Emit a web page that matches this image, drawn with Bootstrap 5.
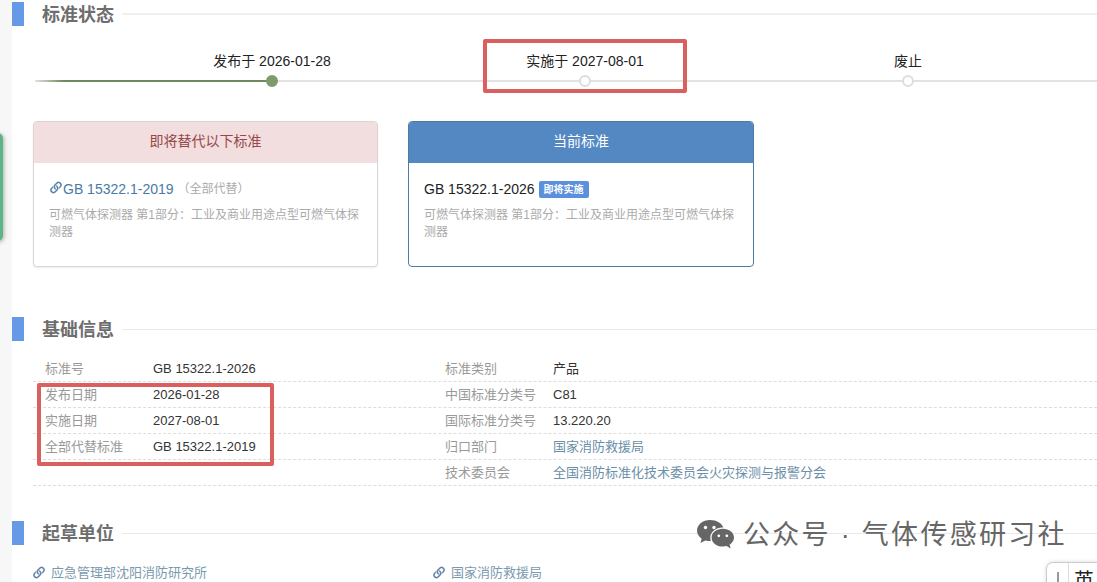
<!DOCTYPE html>
<html lang="zh-CN">
<head>
<meta charset="utf-8">
<title>标准状态</title>
<link href="https://cdn.jsdelivr.net/npm/bootstrap@5.3.0/dist/css/bootstrap.min.css" rel="stylesheet">
<style>
html, body { height: 582px; overflow: hidden; }
body { background: #f7f7f7; font-family: "Liberation Sans", "Noto Sans CJK SC", sans-serif; font-size: 13px; color: #222; position: relative; }
.sheet { margin-left: 12px; height: 582px; background: #fff; padding-top: 2px; overflow: hidden; }
.sec-head { height: 24px; }
.sec-mark { width: 12px; height: 24px; background: #6699e6; margin-right: 18px; }
.sec-title { font-size: 18px; font-weight: 700; color: #6e6e6e; margin: 0; line-height: 26px; height: 24px; }
.sec-rule { height: 1px; background: #e9e9e9; margin-left: 8px; margin-top: 1px; }
.sec-rule-thick { height: 2px; background: #f0f0f0; margin-top: 0; }
.steps { position: relative; margin-top: 25px; padding-left: 104px; }
.track { position: absolute; left: 23px; right: 0; top: 29px; height: 2px; background: #e2e2e2; }
.track-done { position: absolute; left: 23px; width: 237px; top: 29px; height: 2px; background: linear-gradient(90deg, #e2e2e2, #6f8a5e 12%, #6f8a5e); }
.step { position: relative; font-size: 14px; line-height: 20px; color: #222; text-align: center; }
.step-a { width: 312px; } .step-b { width: 314px; } .step-c { width: 332px; }
.dot { width: 12px; height: 12px; border-radius: 50%; margin: 4px auto 0; background: #fff; border: 2px solid #ddd; }
.dot-done { background: #7f9a6c; border-color: #7f9a6c; }
.cards { margin: 34px 0 0 21px; gap: 30px; }
.std-card { width: 346px; height: 146px; border-radius: 4px; }
.card-old { width: 345px; border-color: #ddd4d4; box-shadow: 0 1px 2px rgba(0,0,0,.08); }
.card-now { border-color: #4f7ba3; }
.std-card .card-header { height: 41px; padding: 0; line-height: 38px; text-align: center; font-size: 14px; border-bottom: 0; border-radius: 3px 3px 0 0; }
.head-old { background: #f2dede; color: #96484a; }
.head-now { background: #5488c2; color: #fff; }
.std-card .card-body { padding: 16px 15px 0; }
.std-name { font-size: 14px; line-height: 20px; display: flex; align-items: center; }
.std-link { color: #4a7aa6; text-decoration: none; }
.std-note { color: #aaa; font-size: 12px; margin-left: 4px; }
.std-desc { color: #aaa; font-size: 12px; line-height: 17px; margin-top: 8px; }
.pill { background: #5b90dc; color: #fff; font-size: 10px; font-weight: 700; padding: 0 5px; line-height: 17px; margin-left: 4px; border-radius: 2px; }
.chain { width: 16px; height: 16px; fill: #4a7aa6; stroke: #4a7aa6; stroke-width: .45; flex: none; margin: -2px -1px 0 -1px; }
.sec-two { margin-top: 50px; }
.info { margin: 15px 0 0 21px; }
.info-row { height: 26px; border-bottom: 1px dashed #ddd; line-height: 25px; }
.info-cell { width: 400px; padding-left: 12px; white-space: nowrap; }
.info-key { width: 108px; color: #999; }
.info-val { color: #333; }
.info-link { color: #6b8fa8; text-decoration: none; }
.sec-three { margin-top: 35px; }
.org-list { margin: 15px 0 0 21px; line-height: 26px; }
.org-item { width: 400px; }
.org-item .chain { margin: 0 4px 0 -2px; fill: #55799a; stroke: #55799a; }
.org-item a { color: #7b9ab0; text-decoration: none; }
.mark-box { position: absolute; border: 4px solid #d9605f; border-radius: 2px; }
.mark-top { left: 483px; top: 39px; width: 204px; height: 54px; }
.mark-left { left: 37px; top: 383px; width: 237px; height: 83px; }
.side-tab { position: absolute; left: -8px; top: 133px; width: 11px; height: 108px; background: #5cb585; border-radius: 6px; box-shadow: 1px 1px 4px rgba(0,0,0,.3); }
.watermark { position: absolute; left: 697px; top: 516px; color: #666; font-size: 27px; letter-spacing: 2.3px; line-height: 38px; white-space: nowrap; background: transparent; }
.watermark svg { width: 37px; height: 31px; margin-right: 9px; fill: #666; }
.ime { position: absolute; left: 1046px; top: 562px; width: 60px; height: 30px; background: #fff; border: 1px solid #ccc; border-radius: 7px 0 0 0; box-shadow: 0 0 4px rgba(0,0,0,.15); overflow: hidden; }
.ime-grip { width: 22px; border-right: 1px solid #ddd; }
.ime-bar { width: 2px; height: 20px; background: #999; margin: 9px 0 0 10px; }
.ime-char { font-size: 20px; line-height: 20px; color: #222; margin: 8px 0 0 5px; }
</style>
</head>
<body>
<svg width="0" height="0" class="position-absolute">
  <symbol id="chain" viewBox="0 0 16 16">
    <path d="M4.715 6.542 3.343 7.914a3 3 0 1 0 4.243 4.243l1.828-1.829A3 3 0 0 0 8.586 5.5L8 6.086a1.002 1.002 0 0 0-.154.199 2 2 0 0 1 .861 3.337L6.88 11.45a2 2 0 1 1-2.83-2.83l.793-.792a4.018 4.018 0 0 1-.128-1.287z"/>
    <path d="M6.586 4.672A3 3 0 0 0 7.414 9.5l.775-.776a2 2 0 0 1-.896-3.346L9.12 3.55a2 2 0 1 1 2.83 2.83l-.793.792c.112.42.155.855.128 1.287l1.372-1.372a3 3 0 1 0-4.243-4.243L6.586 4.672z"/>
  </symbol>
</svg>

<main class="sheet">
  <section>
    <div class="sec-head d-flex align-items-center">
      <span class="sec-mark"></span>
      <h2 class="sec-title">标准状态</h2>
      <span class="sec-rule sec-rule-thick flex-grow-1"></span>
    </div>
    <div class="steps d-flex">
      <div class="track"></div>
      <div class="track-done"></div>
      <div class="step step-a flex-none">发布于 2026-01-28<div class="dot dot-done"></div></div>
      <div class="step step-b flex-none">实施于 2027-08-01<div class="dot"></div></div>
      <div class="step step-c flex-none">废止<div class="dot"></div></div>
    </div>
    <div class="cards d-flex">
      <div class="card std-card card-old">
        <div class="card-header head-old">即将替代以下标准</div>
        <div class="card-body">
          <div class="std-name">
            <svg class="chain"><use href="#chain"/></svg>
            <a class="std-link" href="#">GB 15322.1-2019</a>
            <span class="std-note">（全部代替）</span>
          </div>
          <div class="std-desc">可燃气体探测器 第1部分：工业及商业用途点型可燃气体探测器</div>
        </div>
      </div>
      <div class="card std-card card-now">
        <div class="card-header head-now">当前标准</div>
        <div class="card-body">
          <div class="std-name">GB 15322.1-2026 <span class="pill">即将实施</span></div>
          <div class="std-desc">可燃气体探测器 第1部分：工业及商业用途点型可燃气体探测器</div>
        </div>
      </div>
    </div>
  </section>

  <section class="sec-two">
    <div class="sec-head d-flex align-items-center">
      <span class="sec-mark"></span>
      <h2 class="sec-title">基础信息</h2>
      <span class="sec-rule flex-grow-1"></span>
    </div>
    <div class="info">
      <div class="info-row d-flex">
        <div class="info-cell d-flex"><span class="info-key">标准号</span><span class="info-val">GB 15322.1-2026</span></div>
        <div class="info-cell d-flex"><span class="info-key">标准类别</span><span class="info-val">产品</span></div>
      </div>
      <div class="info-row d-flex">
        <div class="info-cell d-flex"><span class="info-key">发布日期</span><span class="info-val">2026-01-28</span></div>
        <div class="info-cell d-flex"><span class="info-key">中国标准分类号</span><span class="info-val">C81</span></div>
      </div>
      <div class="info-row d-flex">
        <div class="info-cell d-flex"><span class="info-key">实施日期</span><span class="info-val">2027-08-01</span></div>
        <div class="info-cell d-flex"><span class="info-key">国际标准分类号</span><span class="info-val">13.220.20</span></div>
      </div>
      <div class="info-row d-flex">
        <div class="info-cell d-flex"><span class="info-key">全部代替标准</span><span class="info-val">GB 15322.1-2019</span></div>
        <div class="info-cell d-flex"><span class="info-key">归口部门</span><a class="info-link" href="#">国家消防救援局</a></div>
      </div>
      <div class="info-row d-flex">
        <div class="info-cell d-flex"></div>
        <div class="info-cell d-flex"><span class="info-key">技术委员会</span><a class="info-link" href="#">全国消防标准化技术委员会火灾探测与报警分会</a></div>
      </div>
    </div>
  </section>

  <section class="sec-three">
    <div class="sec-head d-flex align-items-center">
      <span class="sec-mark"></span>
      <h2 class="sec-title">起草单位</h2>
      <span class="sec-rule flex-grow-1"></span>
    </div>
    <div class="org-list d-flex">
      <div class="org-item d-flex align-items-center"><svg class="chain"><use href="#chain"/></svg><a href="#">应急管理部沈阳消防研究所</a></div>
      <div class="org-item d-flex align-items-center"><svg class="chain"><use href="#chain"/></svg><a href="#">国家消防救援局</a></div>
    </div>
  </section>
</main>

<div class="side-tab"></div>
<div class="mark-box mark-top"></div>
<div class="mark-box mark-left"></div>

<div class="watermark d-flex align-items-center">
  <svg viewBox="0 0 37 31">
    <path d="M13 0C5.8 0 0 4.7 0 10.6c0 3.3 1.8 6.2 4.7 8.2L3.4 23l5-2.6c1.4.4 2.9.7 4.6.7h.9c-.4-1.1-.6-2.2-.6-3.4C13.300 12 18.800 7.500 25.500 7.500c.3 0 .6 0 .8 0C24.900 3.200 19.500 0 13 0z"/>
    <path d="M37 17.700C37 12.600 32 8.800 25.800 8.800S14.600 12.600 14.600 17.700 19.600 26.600 25.800 26.600c1.300 0 2.600-.2 3.800-.5l4.100 2.300-1.100-3.700c2.600-1.700 4.400-4.200 4.400-6.900z"/>
    <circle cx="8.500" cy="7.500" r="1.700" fill="#fff"/>
    <circle cx="17" cy="7.500" r="1.700" fill="#fff"/>
    <circle cx="21.800" cy="15.800" r="1.400" fill="#fff"/>
    <circle cx="29.800" cy="15.800" r="1.400" fill="#fff"/>
  </svg>
  <span>公众号 · 气体传感研习社</span>
</div>

<div class="ime d-flex">
  <div class="ime-grip"><div class="ime-bar"></div></div>
  <div class="ime-char">英</div>
</div>
</body>
</html>
